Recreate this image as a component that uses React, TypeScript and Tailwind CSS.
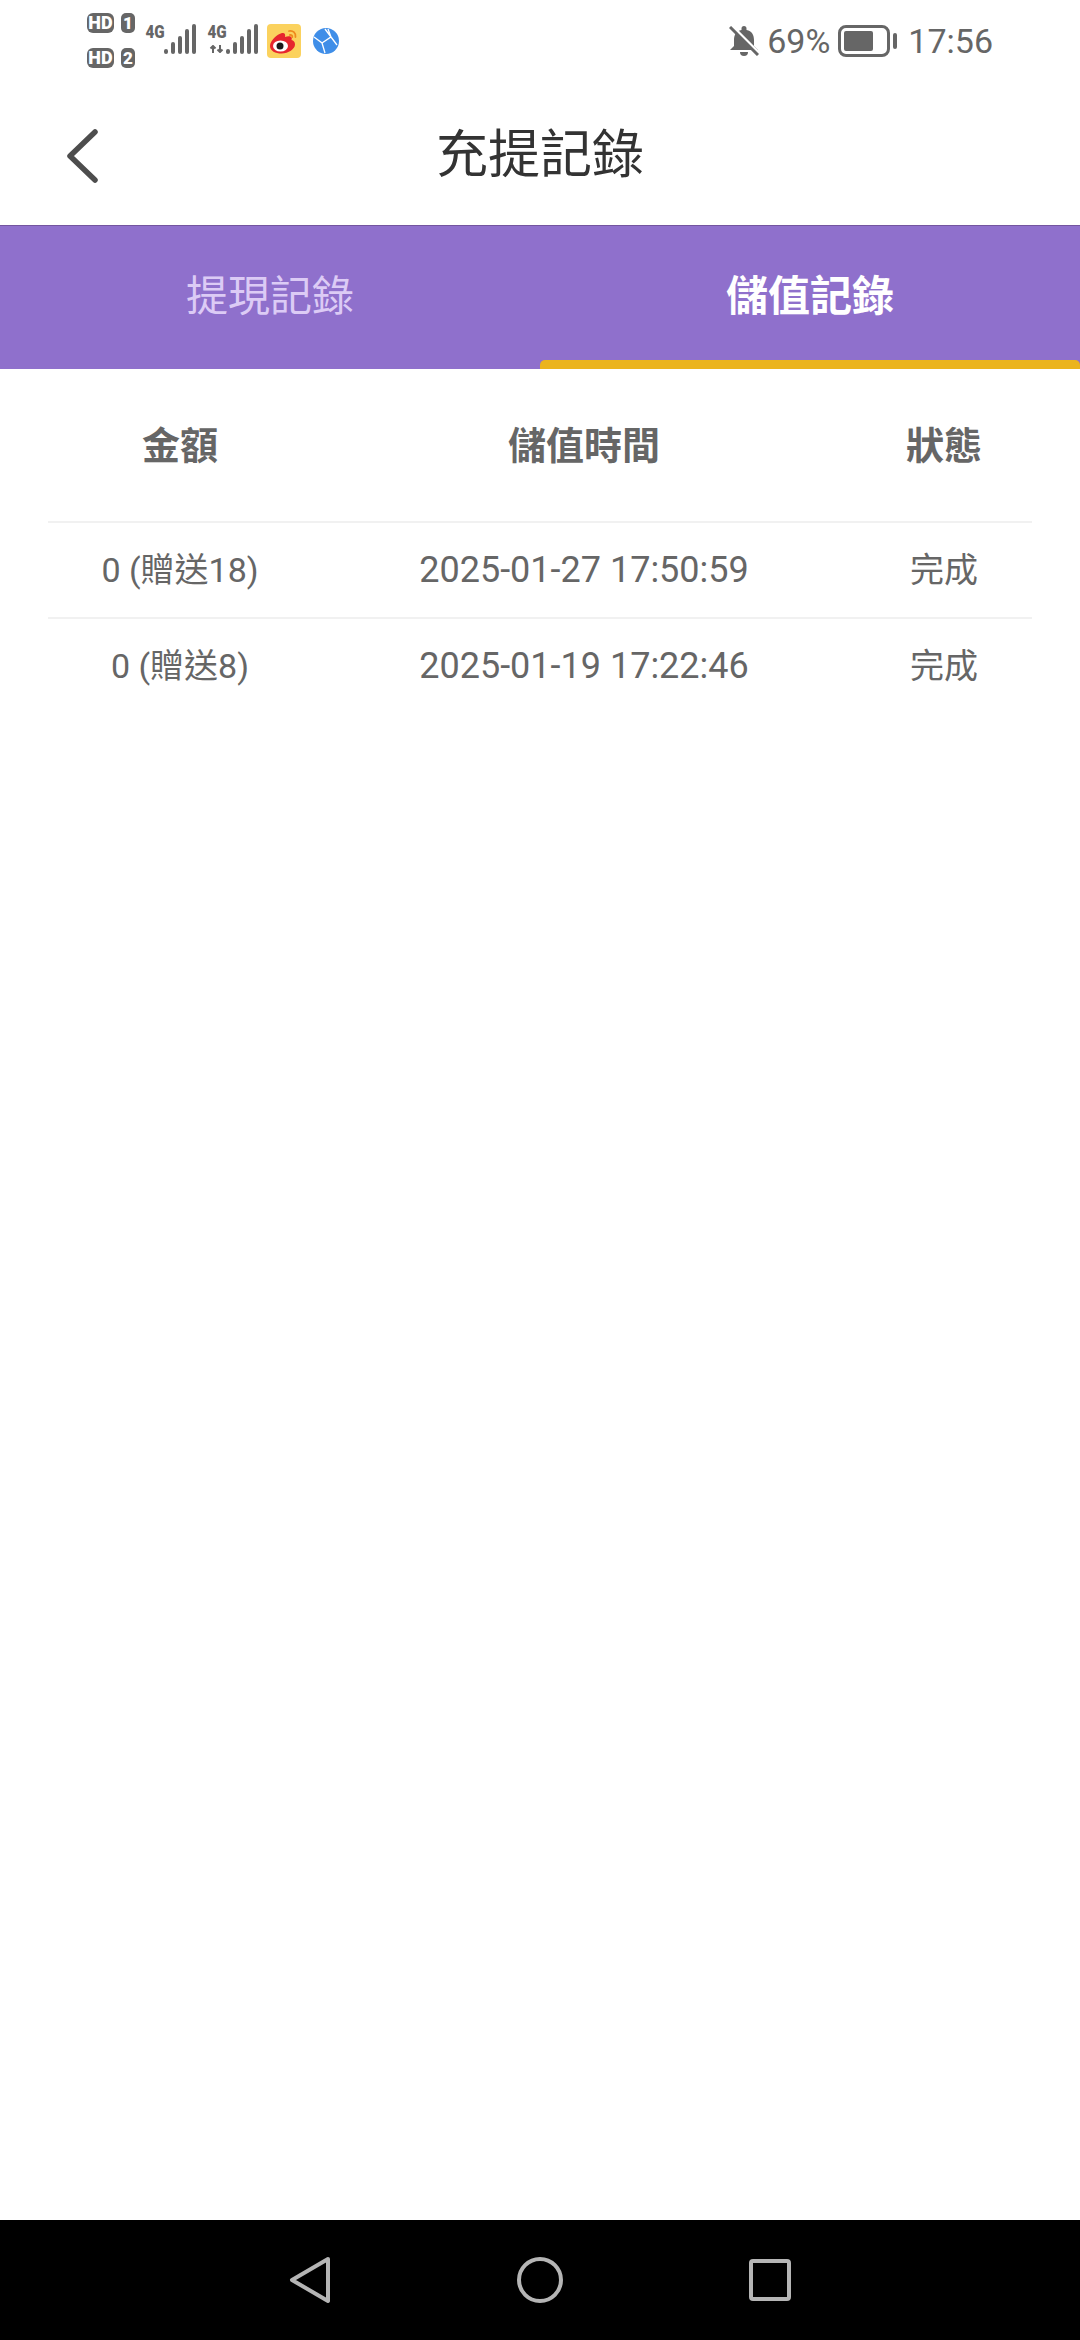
const records = [
  { amount: "0 (贈送18)", time: "2025-01-27 17:50:59", status: "完成" },
  { amount: "0 (贈送8)", time: "2025-01-19 17:22:46", status: "完成" },
];

const columns = "grid grid-cols-[264px_544px_1fr] text-center";

function SimBadge({ slot }: { slot: string }) {
  return (
    <div className="flex h-5 items-center gap-[7px]">
      <span className="flex h-5 w-[27px] items-center justify-center rounded-[6px] bg-[#666] font-['Roboto',sans-serif] text-[18px] leading-none font-black text-white">HD</span>
      <span className="flex h-5 w-[14px] items-center justify-center rounded-[5px] bg-[#666] font-['Roboto',sans-serif] text-[17px] leading-none font-black text-white">{slot}</span>
    </div>
  );
}

function Signal({ arrows }: { arrows?: boolean }) {
  return (
    <div className="flex h-[32px] items-start">
      <div className="flex w-[18px] flex-col items-center">
        <span className="scale-x-[0.8] font-['Roboto',sans-serif] text-[19px] leading-[16px] font-black text-[#666]">4G</span>
        {arrows && (
          <svg viewBox="0 0 18 8" className="mt-[5px] h-2 w-[18px]" fill="none" stroke="#666" strokeWidth="2">
            <path d="M5 8V1M2.5 3.5 5 1l2.500 2.500M12 0v7M9.500 4.500 12 7l2.500-2.500" />
          </svg>
        )}
      </div>
      <svg viewBox="0 0 32 30" className="h-[30px] w-[32px]" fill="#666">
        <rect x="0" y="25" width="4" height="5" rx="2" />
        <rect x="7" y="18" width="4" height="12" rx="2" />
        <rect x="14" y="12" width="4" height="18" rx="2" />
        <rect x="21" y="5" width="4" height="25" rx="2" />
        <rect x="28" y="0" width="4" height="30" rx="2" />
      </svg>
    </div>
  );
}

function WeiboIcon() {
  return (
    <svg viewBox="0 0 34 34" className="h-[34px] w-[34px]">
      <rect width="34" height="34" rx="4" fill="#fbd25e" />
      <path d="M3 22c0-5 7-12 12-13 3-.5 3.500 1.500 3 4 4-1.500 8-1 6.500 3 2 .5 3.500 2 3.500 4.500 0 4.500-6.500 9-13.500 9C8.500 29.500 3 27 3 22z" fill="#e6262e" />
      <ellipse cx="13.500" cy="22" rx="7.500" ry="5.500" fill="#fff" />
      <circle cx="13" cy="22" r="3.500" fill="#1a1a1a" />
      <path d="M22 7c4-1 7 2 6.500 6M23 11c1.500-.3 2.500.8 2.300 2.200" fill="none" stroke="#ef8a1c" strokeWidth="1.800" strokeLinecap="round" />
    </svg>
  );
}

function GlobeIcon() {
  return (
    <svg viewBox="0 0 26 26" className="h-[26px] w-[26px]">
      <circle cx="13" cy="13" r="13" fill="#3f8ee8" />
      <path d="M1 9l8 6 3 10M9 15l9-6 6 8M18 9 15 1M18 9l-6-8" fill="none" stroke="#fff" strokeWidth="1.300" />
    </svg>
  );
}

function MutedBell() {
  return (
    <svg viewBox="0 0 30 30" className="h-[30px] w-[30px]">
      <path d="M15 0a2.500 2.500 0 0 1 2.500 2.500V4C23 5 25 9 25 14v6l4 4H1l4-4v-6C5 9 7 5 12.500 4V2.500A2.500 2.500 0 0 1 15 0z" fill="#666" />
      <path d="M11 26h8a4 4 0 0 1-8 0z" fill="#666" />
      <path d="M3 0l27 27" stroke="#fff" strokeWidth="3" />
      <path d="M1 1l28 28" stroke="#666" strokeWidth="3" />
    </svg>
  );
}

function StatusBar() {
  return (
    <div className="flex h-[68px] items-start justify-between px-[87px] pt-[13px]">
      <div className="flex items-start">
        <div className="flex flex-col gap-[15px]">
          <SimBadge slot="1" />
          <SimBadge slot="2" />
        </div>
        <div className="mt-[11px] ml-[11px] flex items-start gap-[12px]">
          <Signal />
          <Signal arrows />
        </div>
        <div className="mt-[11px] ml-[9px] flex items-center gap-[12px]">
          <WeiboIcon />
          <GlobeIcon />
        </div>
      </div>
      <div className="mt-[11px] flex items-center text-[34px] leading-none text-[#666]">
        <MutedBell />
        <span className="ml-[8px]">69%</span>
        <div className="ml-[8px] flex items-center gap-[3px]">
          <div className="flex h-[32px] w-[52px] items-center rounded-[8px] border-[3px] border-[#666] p-[3px]">
            <div className="h-[20px] w-[29px] rounded-[2px] bg-[#666]" />
          </div>
          <div className="h-[16px] w-[4px] rounded-[2px] bg-[#666]" />
        </div>
        <span className="ml-[11px]">17:56</span>
      </div>
    </div>
  );
}

function Header() {
  return (
    <div className="grid h-[157px] grid-cols-[1fr_auto_1fr] items-center pt-[18px]">
      <svg viewBox="0 0 32 54" className="ml-[66px] h-[54px] w-[32px]" fill="none" stroke="#4d4d4d" strokeWidth="5.500" strokeLinecap="round" strokeLinejoin="round">
        <path d="M29 3 4 27l25 24" />
      </svg>
      <h1 className="text-[52px] leading-none font-normal text-[#333]">充提記錄</h1>
    </div>
  );
}

function Tabs() {
  return (
    <div className="grid h-[144px] grid-cols-2 border-t-[1px] border-[#73559f] bg-[#8f70cc]">
      <div className="flex items-center justify-center pb-[2px] text-[42px] leading-none text-[#dccbf5]">提現記錄</div>
      <div className="relative flex items-center justify-center pb-[2px] text-[42px] leading-none font-bold text-white">
        儲值記錄
        <div className="absolute right-0 bottom-0 left-0 h-[9px] rounded-t-[5px] bg-[#ebb41e]" />
      </div>
    </div>
  );
}

function RecordsTable() {
  return (
    <div className="mx-[48px]">
      <div className={`${columns} h-[152px] items-center pt-[2px] text-[38px] font-bold text-[#666]`}>
        <span>金額</span>
        <span>儲值時間</span>
        <span>狀態</span>
      </div>
      {records.map((record) => (
        <div key={record.time} className={`${columns} h-[96px] items-center border-t-2 border-[#f1f1f1] text-[34px] leading-none text-[#666]`}>
          <span>{record.amount}</span>
          <span className="text-[36px]">{record.time}</span>
          <span>{record.status}</span>
        </div>
      ))}
    </div>
  );
}

function NavBar() {
  return (
    <div className="flex h-[120px] items-center justify-center gap-[186px] bg-black">
      <svg viewBox="0 0 42 48" className="h-[48px] w-[42px]" fill="none" stroke="#b5b5b5" strokeWidth="4" strokeLinejoin="round">
        <path d="M39 3 3 24l36 21z" />
      </svg>
      <div className="h-[46px] w-[46px] rounded-full border-[4px] border-[#b5b5b5]" />
      <div className="h-[42px] w-[42px] rounded-[4px] border-[4px] border-[#b5b5b5]" />
    </div>
  );
}

export default function App() {
  return (
    <div className="flex h-[2340px] w-[1080px] flex-col bg-white font-['Roboto','Noto_Sans_CJK_TC',sans-serif]">
      <StatusBar />
      <Header />
      <Tabs />
      <main className="flex-1">
        <RecordsTable />
      </main>
      <NavBar />
    </div>
  );
}
